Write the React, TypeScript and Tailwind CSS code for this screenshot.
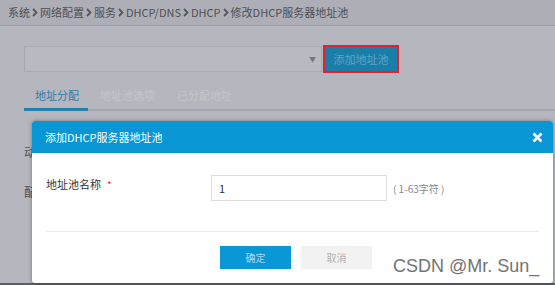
import React from "react";

const crumbs = ["系统", "网络配置", "服务", "DHCP/DNS", "DHCP", "修改DHCP服务器地址池"];

function Chevron() {
  return (
    <svg width="6" height="9" viewBox="0 0 6 9" className="mx-[2px]">
      <path d="M1 1 L4.5 4.5 L1 8" stroke="#55565c" strokeWidth="1.8" fill="none" />
    </svg>
  );
}

export default function App(): JSX.Element {
  return (
    <div
      className="relative w-[555px] h-[285px] overflow-hidden bg-[#b6b7be]"
      style={{ fontFamily: '"Noto Sans CJK SC", "Noto Sans", sans-serif' }}
    >
      {/* page behind the dialog */}
      <div className="h-[26px] flex items-center pl-[8px] bg-[#aeafb6] border-b border-[#9fa0a7] text-[11px] text-[#4d4e54]">
        {crumbs.map((c, i) => (
          <React.Fragment key={c}>
            {i > 0 && <Chevron />}
            <span>{c}</span>
          </React.Fragment>
        ))}
      </div>

      <div className="pl-[24px] pt-[19px]">
        <div className="flex items-center">
          <div className="w-[298px] h-[26px] bg-[#b9bac1] border border-[#a9aab1] flex items-center justify-end pr-[5px]">
            <span className="text-[7px] text-[#77787e]">▼</span>
          </div>
          <div className="ml-[1px] w-[76px] h-[28px] border-2 border-[#e3202b] bg-[#1b7eaa] flex items-center justify-center text-[11px] text-[#62a3c2]">
            添加地址池
          </div>
        </div>

        <div className="mt-[14px] flex text-[11px] border-b-2 border-[#a6a7ae]">
          <div className="w-[64px] h-[24px] pl-[11px] text-[#2a7cab] border-b-[3px] border-[#1f7fae] -mb-[2px]">
            地址分配
          </div>
          <div className="ml-[12px] text-[#c3c4c9]">地址池选项</div>
          <div className="ml-[22px] text-[#c3c4c9]">已分配地址</div>
        </div>

        <div className="mt-[32px] text-[12px] text-[#4d4e54]">动态分配</div>
        <div className="mt-[22px] text-[12px] text-[#4d4e54]">配置网关</div>
      </div>
      <div className="absolute bottom-0 left-0 right-0 h-[2px] bg-[#5d5e63]" />

      {/* dialog */}
      <div className="absolute left-[32px] top-[121px] w-[521px] bg-white rounded-[3px] shadow-[0_0_4px_rgba(0,0,0,0.35)] overflow-hidden">
        <div className="h-[32px] bg-[#0896d4] flex items-center justify-between pl-[13px] pr-[10px]">
          <span className="text-[11px] text-white">添加DHCP服务器地址池</span>
          <svg width="11" height="11" viewBox="0 0 11 11">
            <path d="M1.5 1.5 L9.5 9.5 M9.5 1.5 L1.5 9.5" stroke="white" strokeWidth="2.6" />
          </svg>
        </div>

        <div className="px-[14px] pt-[22px] pb-[14px]">
          <div className="flex items-start">
            <div className="w-[165px] flex items-center text-[11px] text-[#333] pt-[1px]">
              地址池名称
              <span className="ml-[6px] text-[#e0302e] text-[10px]">*</span>
            </div>
            <div className="w-[176px] h-[26px] border border-[#dcdcdc] flex items-center pl-[7px] text-[11px] text-[#333]">
              1
            </div>
            <div className="ml-[6px] h-[26px] flex items-center text-[10px] text-[#888]">
              ( 1-63字符 )
            </div>
          </div>

          <div className="mt-[30px] border-t border-[#e8e8e8]" />

          <div className="mt-[14px] flex items-center">
            <div className="ml-[174px] w-[71px] h-[23px] bg-[#0a97d6] flex items-center justify-center text-[10px] text-[#acdaf0]">
              确定
            </div>
            <div className="ml-[10px] w-[71px] h-[23px] bg-[#f2f2f2] flex items-center justify-center text-[10px] text-[#b3b3b3]">
              取消
            </div>
          </div>
        </div>

        {/* watermark */}
        <div
          className="absolute left-[361px] bottom-[8px] whitespace-nowrap text-[18px] leading-none text-[#737373]"
          style={{ fontFamily: '"Liberation Sans", Arial, sans-serif' }}
        >
          CSDN @Mr. Sun_
        </div>
      </div>
    </div>
  );
}
